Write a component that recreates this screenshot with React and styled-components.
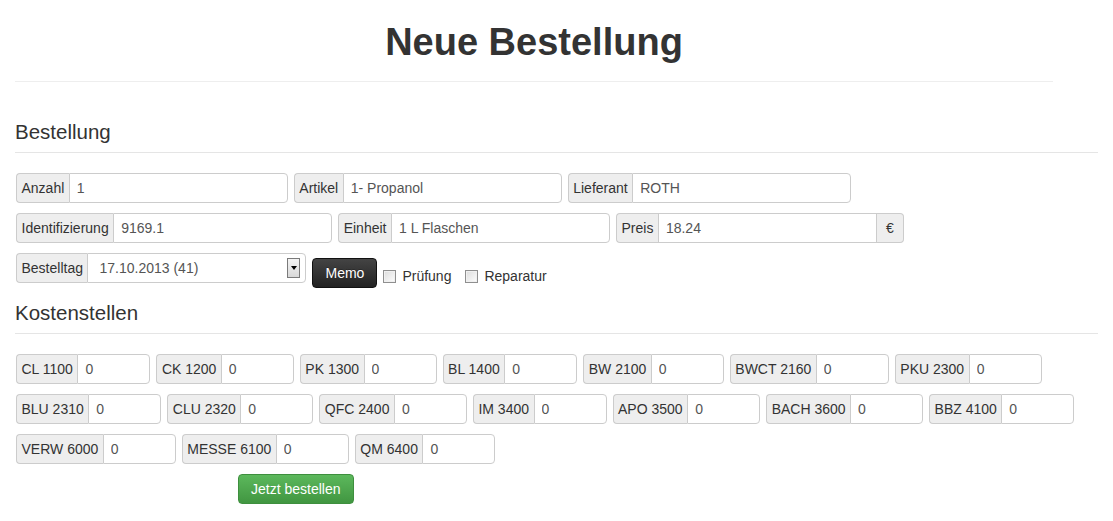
import React from 'react';
import styled, { createGlobalStyle, css } from 'styled-components';

const GlobalStyle = createGlobalStyle`
  body {
    margin: 0;
    background: #fff;
    font-family: "Liberation Sans", Arial, sans-serif;
    font-size: 14px;
    color: #333;
  }
`;

const Page = styled.div`
  padding: 0 15px;
`;

const Header = styled.header`
  max-width: 1038px;
  padding-top: 21px;
  padding-bottom: 18px;
  border-bottom: 1px solid #eee;
`;

const Title = styled.h1`
  margin: 0;
  height: 42px;
  line-height: 42px;
  font-size: 38px;
  font-weight: bold;
  text-align: center;
  color: #333;
`;

const SectionTitle = styled.h3`
  margin: ${(p) => p.top || 38}px 0 0;
  padding-bottom: 8px;
  line-height: 24px;
  font-size: 20.5px;
  font-weight: normal;
  color: #333;
  border-bottom: 1px solid #e5e5e5;
`;

const Rows = styled.div`
  margin-top: 20px;
  padding-left: 1px;
  display: flex;
  flex-direction: column;
  gap: 10px;
`;

const Row = styled.div`
  display: flex;
  align-items: flex-start;
  height: 30px;
  gap: 6px;
`;

const Group = styled.div`
  display: inline-flex;
  height: 30px;
`;

const Addon = styled.span`
  box-sizing: border-box;
  height: 30px;
  line-height: 28px;
  padding: 0 4.5px;
  background: #eee;
  border: 1px solid #ccc;
  color: #333;
  white-space: nowrap;
  ${(p) =>
    p.end
      ? css`
          width: 27px;
          text-align: center;
          border-left: 0;
          border-radius: 0 4px 4px 0;
        `
      : css`
          border-right: 0;
          border-radius: 4px 0 0 4px;
        `}
`;

const Field = styled.input`
  box-sizing: border-box;
  width: ${(p) => p.w || 219}px;
  height: 30px;
  margin: 0;
  padding: 0 7px;
  border: 1px solid #ccc;
  border-radius: ${(p) => (p.mid ? '0' : '0 4px 4px 0')};
  font: inherit;
  color: #555;
  background: #fff;
  outline: none;
`;

const SelectBox = styled.div`
  box-sizing: border-box;
  width: 219px;
  height: 30px;
  padding: 0 5px 0 11px;
  border: 1px solid #ccc;
  border-radius: 0 4px 4px 0;
  display: flex;
  align-items: center;
  justify-content: space-between;
  color: #555;
`;

const Arrow = styled.span`
  box-sizing: border-box;
  width: 13px;
  height: 20px;
  border: 1px solid #7a7a7a;
  background: linear-gradient(#f4f4f4, #d8d8d8);
  display: flex;
  align-items: center;
  justify-content: center;
  &::after {
    content: '';
    border-left: 3.5px solid transparent;
    border-right: 3.5px solid transparent;
    border-top: 4px solid #000;
  }
`;

const Button = styled.button`
  box-sizing: border-box;
  height: 30px;
  margin: ${(p) => p.m || '0'};
  padding: 0 12px;
  border-radius: 4px;
  font: inherit;
  cursor: pointer;
  ${(p) =>
    p.variant === 'success'
      ? css`
          color: #fff;
          border: 1px solid #3e8f3e;
          background: linear-gradient(#5cb85c, #419641);
        `
      : css`
          color: #fff;
          border: 1px solid #111;
          background: linear-gradient(#444, #222);
          text-shadow: 0 -1px 0 rgba(0, 0, 0, 0.25);
        `}
`;

const CheckLabel = styled.label`
  height: 30px;
  margin-top: 8px;
  margin-left: ${(p) => p.gap || 0}px;
  display: flex;
  align-items: center;
  gap: 6px;
  color: #333;
`;

const CheckBox = styled.span`
  box-sizing: border-box;
  width: 13px;
  height: 13px;
  border: 1px solid #8f8f8f;
  background: linear-gradient(135deg, #dcdcdc, #fdfdfd);
  box-shadow: inset 0 0 0 1px #f0f0f0;
`;

const Footer = styled.div`
  margin-top: 10px;
  padding-left: 223px;
`;

const costRows = [
  ['CL 1100', 'CK 1200', 'PK 1300', 'BL 1400', 'BW 2100', 'BWCT 2160', 'PKU 2300'],
  ['BLU 2310', 'CLU 2320', 'QFC 2400', 'IM 3400', 'APO 3500', 'BACH 3600', 'BBZ 4100'],
  ['VERW 6000', 'MESSE 6100', 'QM 6400'],
];

const TextGroup = ({ label, value, suffix }) => (
  <Group>
    <Addon>{label}</Addon>
    <Field defaultValue={value} mid={!!suffix} />
    {suffix && <Addon end>{suffix}</Addon>}
  </Group>
);

export default function App() {
  return (
    <Page>
      <GlobalStyle />
      <Header>
        <Title>Neue Bestellung</Title>
      </Header>

      <SectionTitle>Bestellung</SectionTitle>
      <Rows>
        <Row>
          <TextGroup label="Anzahl" value="1" />
          <TextGroup label="Artikel" value="1- Propanol" />
          <TextGroup label="Lieferant" value="ROTH" />
        </Row>
        <Row>
          <TextGroup label="Identifizierung" value="9169.1" />
          <TextGroup label="Einheit" value="1 L Flaschen" />
          <TextGroup label="Preis" value="18.24" suffix="€" />
        </Row>
        <Row>
          <Group>
            <Addon>Bestelltag</Addon>
            <SelectBox>
              <span>17.10.2013 (41)</span>
              <Arrow />
            </SelectBox>
          </Group>
          <Button m="5px 0 0">Memo</Button>
          <CheckLabel>
            <CheckBox />
            Prüfung
          </CheckLabel>
          <CheckLabel gap={8}>
            <CheckBox />
            Reparatur
          </CheckLabel>
        </Row>
      </Rows>

      <SectionTitle top={18}>Kostenstellen</SectionTitle>
      <Rows>
        {costRows.map((row, i) => (
          <Row key={i}>
            {row.map((label) => (
              <Group key={label}>
                <Addon>{label}</Addon>
                <Field w={73} defaultValue="0" />
              </Group>
            ))}
          </Row>
        ))}
      </Rows>

      <Footer>
        <Button variant="success">Jetzt bestellen</Button>
      </Footer>
    </Page>
  );
}
